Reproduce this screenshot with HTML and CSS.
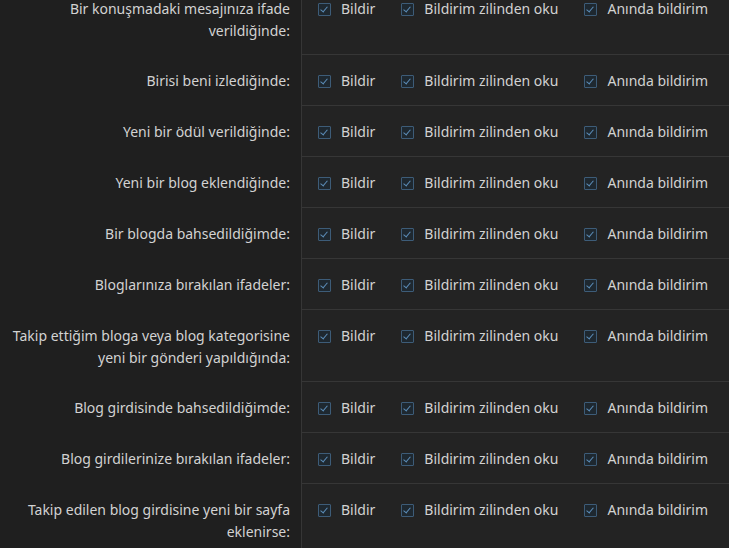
FILE: index.html
```html
<!DOCTYPE html>
<html lang="tr">
<head>
    <meta charset="UTF-8">
    <meta name="viewport" content="width=device-width, initial-scale=1.0">
    <title>Bildirim ayarları</title>
    <link rel="stylesheet" href="styles.css">
</head>
<body>
    <div class="settings">
        <div class="row">
            <div class="label">Bir konuşmadaki mesajınıza ifade verildiğinde:</div>
            <div class="options">
                <label class="opt"><span class="box"></span>Bildir</label>
                <label class="opt"><span class="box"></span>Bildirim zilinden oku</label>
                <label class="opt"><span class="box"></span>Anında bildirim</label>
            </div>
        </div>
        <div class="row">
            <div class="label">Birisi beni izlediğinde:</div>
            <div class="options">
                <label class="opt"><span class="box"></span>Bildir</label>
                <label class="opt"><span class="box"></span>Bildirim zilinden oku</label>
                <label class="opt"><span class="box"></span>Anında bildirim</label>
            </div>
        </div>
        <div class="row">
            <div class="label">Yeni bir ödül verildiğinde:</div>
            <div class="options">
                <label class="opt"><span class="box"></span>Bildir</label>
                <label class="opt"><span class="box"></span>Bildirim zilinden oku</label>
                <label class="opt"><span class="box"></span>Anında bildirim</label>
            </div>
        </div>
        <div class="row">
            <div class="label">Yeni bir blog eklendiğinde:</div>
            <div class="options">
                <label class="opt"><span class="box"></span>Bildir</label>
                <label class="opt"><span class="box"></span>Bildirim zilinden oku</label>
                <label class="opt"><span class="box"></span>Anında bildirim</label>
            </div>
        </div>
        <div class="row">
            <div class="label">Bir blogda bahsedildiğimde:</div>
            <div class="options">
                <label class="opt"><span class="box"></span>Bildir</label>
                <label class="opt"><span class="box"></span>Bildirim zilinden oku</label>
                <label class="opt"><span class="box"></span>Anında bildirim</label>
            </div>
        </div>
        <div class="row">
            <div class="label">Bloglarınıza bırakılan ifadeler:</div>
            <div class="options">
                <label class="opt"><span class="box"></span>Bildir</label>
                <label class="opt"><span class="box"></span>Bildirim zilinden oku</label>
                <label class="opt"><span class="box"></span>Anında bildirim</label>
            </div>
        </div>
        <div class="row">
            <div class="label">Takip ettiğim bloga veya blog kategorisine yeni bir gönderi yapıldığında:</div>
            <div class="options">
                <label class="opt"><span class="box"></span>Bildir</label>
                <label class="opt"><span class="box"></span>Bildirim zilinden oku</label>
                <label class="opt"><span class="box"></span>Anında bildirim</label>
            </div>
        </div>
        <div class="row">
            <div class="label">Blog girdisinde bahsedildiğimde:</div>
            <div class="options">
                <label class="opt"><span class="box"></span>Bildir</label>
                <label class="opt"><span class="box"></span>Bildirim zilinden oku</label>
                <label class="opt"><span class="box"></span>Anında bildirim</label>
            </div>
        </div>
        <div class="row">
            <div class="label">Blog girdilerinize bırakılan ifadeler:</div>
            <div class="options">
                <label class="opt"><span class="box"></span>Bildir</label>
                <label class="opt"><span class="box"></span>Bildirim zilinden oku</label>
                <label class="opt"><span class="box"></span>Anında bildirim</label>
            </div>
        </div>
        <div class="row">
            <div class="label">Takip edilen blog girdisine yeni bir sayfa eklenirse:</div>
            <div class="options">
                <label class="opt"><span class="box"></span>Bildir</label>
                <label class="opt"><span class="box"></span>Bildirim zilinden oku</label>
                <label class="opt"><span class="box"></span>Anında bildirim</label>
            </div>
        </div>
    </div>
</body>
</html>
```

FILE: styles.css
```css
body {
    margin: 0;
    background: #1f1f1f;
    color: #d2d2d2;
    font-family: "Noto Sans", sans-serif;
    font-size: 14px;
    overflow: hidden;
}

.settings {
    margin-top: -17px;
}

.row {
    display: grid;
    grid-template-columns: 301px 1fr;
    line-height: 22px;
}

.label {
    text-align: right;
    padding: 15px 11px 13px 10px;
}

.options {
    display: flex;
    align-items: flex-start;
    padding: 15px 0 13px 16px;
    background: #232323;
    border-left: 1px solid #363636;
    border-bottom: 1px solid #363636;
    white-space: nowrap;
}

.row:last-child .options {
    border-bottom: none;
}

.opt {
    display: flex;
    align-items: center;
    margin-right: 26px;
}

.box {
    width: 11px;
    height: 11px;
    margin-right: 10px;
    border: 1px solid #3d5c78;
    border-radius: 1px;
    background: #1e2830;
    position: relative;
}

.box::after {
    content: "";
    position: absolute;
    left: 3px;
    top: 1px;
    width: 3px;
    height: 6px;
    border: solid #5c8db8;
    border-width: 0 1.5px 1.5px 0;
    transform: rotate(40deg);
}
```
